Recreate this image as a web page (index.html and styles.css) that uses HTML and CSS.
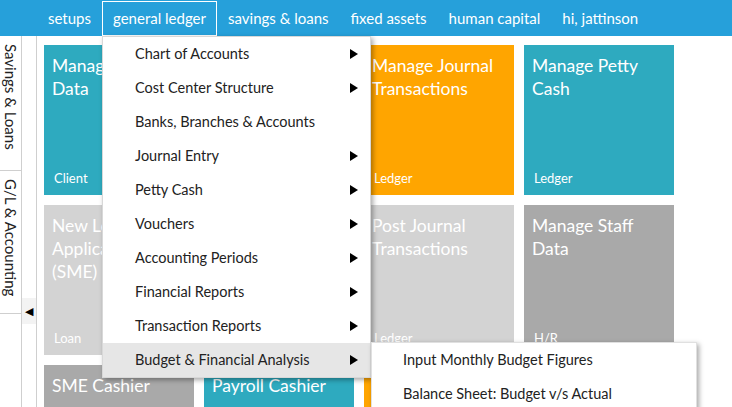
FILE: index.html
```html
<!DOCTYPE html>
<html>
<head>
<meta charset="utf-8">
<link rel="stylesheet" href="styles.css">
</head>
<body>
<header class="topbar">
  <nav class="nav">
    <div class="nav-item">setups</div>
    <div class="nav-item active">general ledger
      <ul class="menu">
        <li class="menu-item has-sub">Chart of Accounts</li>
        <li class="menu-item has-sub">Cost Center Structure</li>
        <li class="menu-item">Banks, Branches &amp; Accounts</li>
        <li class="menu-item has-sub">Journal Entry</li>
        <li class="menu-item has-sub">Petty Cash</li>
        <li class="menu-item has-sub">Vouchers</li>
        <li class="menu-item has-sub">Accounting Periods</li>
        <li class="menu-item has-sub">Financial Reports</li>
        <li class="menu-item has-sub">Transaction Reports</li>
        <li class="menu-item has-sub hover">Budget &amp; Financial Analysis
          <ul class="submenu">
            <li class="menu-item">Input Monthly Budget Figures</li>
            <li class="menu-item">Balance Sheet: Budget v/s Actual</li>
          </ul>
        </li>
      </ul>
    </div>
    <div class="nav-item">savings &amp; loans</div>
    <div class="nav-item">fixed assets</div>
    <div class="nav-item">human capital</div>
    <div class="nav-item">hi, jattinson</div>
  </nav>
</header>
<div class="main">
  <aside class="tabs">
    <div class="tab tab-1"><span class="tab-label">Savings &amp; Loans</span></div>
    <div class="tab tab-2"><span class="tab-label">G/L &amp; Accounting</span></div>
  </aside>
  <div class="collapse">
    <div class="collapse-btn">&#9664;</div>
  </div>
  <section class="tiles">
    <div class="tile teal"><div class="tile-title">Manage Client Data</div><div class="tile-label">Client</div></div>
    <div class="tile orange"><div class="tile-title">Manage Chart of Accounts</div><div class="tile-label">Ledger</div></div>
    <div class="tile orange"><div class="tile-title">Manage Journal Transactions</div><div class="tile-label">Ledger</div></div>
    <div class="tile teal"><div class="tile-title">Manage Petty Cash</div><div class="tile-label">Ledger</div></div>
    <div class="tile light"><div class="tile-title">New Loan Application (SME)</div><div class="tile-label">Loan</div></div>
    <div class="tile light"><div class="tile-title">Post Petty Cash</div><div class="tile-label">Ledger</div></div>
    <div class="tile light"><div class="tile-title">Post Journal Transactions</div><div class="tile-label">Ledger</div></div>
    <div class="tile dark"><div class="tile-title">Manage Staff Data</div><div class="tile-label">H/R</div></div>
    <div class="tile dark"><div class="tile-title">SME Cashier</div><div class="tile-label">Loan</div></div>
    <div class="tile teal"><div class="tile-title">Payroll Cashier</div><div class="tile-label">H/R</div></div>
    <div class="tile orange"><div class="tile-title">Manage Budgets</div><div class="tile-label">Ledger</div></div>
    <div class="tile teal"><div class="tile-title">Manage Assets</div><div class="tile-label">Assets</div></div>
  </section>
</div>
</body>
</html>
```
FILE: styles.css
```css
* { box-sizing: border-box; }
html, body {
  margin: 0;
  padding: 0;
  height: 100%;
  overflow: hidden;
  background: #fff;
  font-family: "Lato", "Open Sans", sans-serif;
}
.topbar {
  height: 36px;
  background: #26a0da;
}
.nav {
  display: flex;
  padding-left: 37px;
  height: 36px;
}
.nav-item {
  position: relative;
  color: #fff;
  font-size: 15px;
  line-height: 32px;
  height: 35px;
  margin-top: 1px;
  padding: 0 10px;
  border: 1px solid transparent;
  border-bottom: none;
  white-space: nowrap;
}
.nav-item.active {
  border: 1px solid #fff;
}
.menu, .submenu {
  list-style: none;
  margin: 0;
  padding: 0;
  position: absolute;
  background: #fff;
  box-shadow: 2px 2px 5px rgba(0,0,0,0.35);
  border: 1px solid #d8d8d8;
  z-index: 10;
}
.menu {
  top: 34px;
  left: -1px;
  width: 269px;
}
.menu-item {
  position: relative;
  height: 34px;
  line-height: 34px;
  padding-left: 32px;
  font-size: 14.5px;
  color: #222;
  white-space: nowrap;
}
.menu-item.has-sub::after {
  content: "";
  position: absolute;
  right: 12px;
  top: 12px;
  border-left: 8px solid #000;
  border-top: 5px solid transparent;
  border-bottom: 5px solid transparent;
}
.menu-item.hover {
  background: #e6e6e6;
}
.submenu {
  top: -1px;
  left: 268px;
  width: 326px;
  border-color: #e0e0e0;
}
.submenu .menu-item {
  padding-left: 31px;
}
.main {
  display: flex;
  height: 371px;
}
.tabs {
  width: 22px;
  border-right: 1px solid #cfcfcf;
  display: flex;
  flex-direction: column;
}
.tab {
  border-bottom: 1px solid #cfcfcf;
  writing-mode: vertical-rl;
  font-size: 15px;
  color: #222;
  padding-top: 8px;
  line-height: 21px;
}
.tab-1 { height: 135px; }
.tab-2 { height: 143px; }
.collapse {
  width: 15px;
  border-right: 1px solid #cfcfcf;
  padding-top: 262px;
}
.collapse-btn {
  height: 26px;
  background: #f3f3f3;
  font-size: 11px;
  line-height: 26px;
  text-align: center;
  color: #000;
}
.tiles {
  display: grid;
  grid-template-columns: repeat(4, 150px);
  grid-auto-rows: 150px;
  gap: 10px;
  padding: 9px 0 0 7px;
  overflow: hidden;
}
.tile {
  position: relative;
  color: #fff;
  padding: 9px 8px;
}
.tile-title {
  font-size: 17.5px;
  line-height: 23px;
}
.tile-label {
  position: absolute;
  left: 10px;
  bottom: 9px;
  font-size: 13px;
}
.teal { background: #2eaabf; }
.orange { background: #ffa500; }
.light { background: #d3d3d3; }
.dark { background: #a9a9a9; }
```
